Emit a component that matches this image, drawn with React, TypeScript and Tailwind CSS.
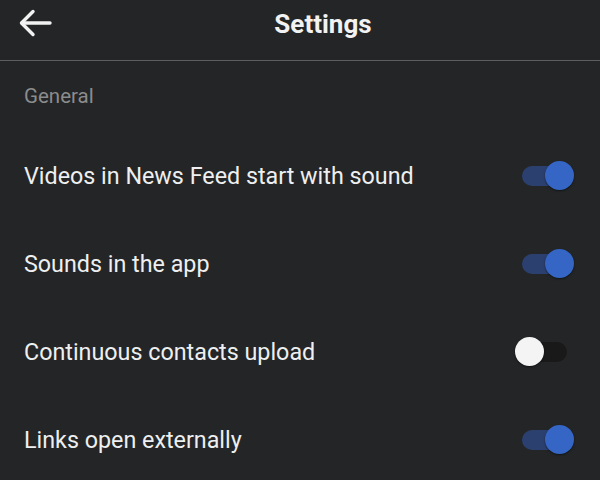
import { useState } from 'react';

type Setting = {
  label: string;
  on: boolean;
};

const initialSettings: Setting[] = [
  { label: 'Videos in News Feed start with sound', on: true },
  { label: 'Sounds in the app', on: true },
  { label: 'Continuous contacts upload', on: false },
  { label: 'Links open externally', on: true },
];

// toggle: ทางยาว 45px, ปุ่มกลม 29px
function Toggle({ on, onClick }: { on: boolean; onClick: () => void }) {
  return (
    <button type="button" onClick={onClick} className="relative w-[59px] h-[29px] shrink-0">
      <span
        className={`absolute left-[7px] right-[7px] top-[5px] h-[20px] rounded-full ${
          on ? 'bg-[#2c4070]' : 'bg-[#19191a]'
        }`}
      />
      <span
        className={`absolute top-0 w-[29px] h-[29px] rounded-full shadow-[0_1px_2px_rgba(0,0,0,0.5)] ${
          on ? 'right-0 bg-[#3566c6]' : 'left-0 bg-[#f4f4f4]'
        }`}
      />
    </button>
  );
}

export default function App() {
  const [settings, setSettings] = useState(initialSettings);

  const toggle = (i: number) => {
    setSettings((prev) => prev.map((s, idx) => (idx === i ? { ...s, on: !s.on } : s)));
  };

  return (
    <div className="w-[600px] h-[480px] overflow-hidden bg-[#242526] font-['Roboto',sans-serif] text-[#e8e9ea]">
      {/* หัวข้อ */}
      <div className="relative h-[61px] border-b border-[#5d5e5f] flex items-center justify-center">
        <svg
          className="absolute left-[17px] top-[7px]"
          width="38"
          height="32"
          viewBox="0 0 38 32"
          fill="none"
          stroke="#f2f2f2"
          strokeWidth="3.4"
          strokeLinecap="round"
          strokeLinejoin="round"
        >
          <path d="M33 16H5" />
          <path d="M16 4.5L4.5 16L16 27.5" />
        </svg>
        <h1 className="pl-[46px] pb-[12px] text-[26px] font-bold text-[#f2f2f2] leading-none">Settings</h1>
      </div>

      <div className="px-[24px] pt-[23px] pb-[23px] text-[20.5px] leading-[24px] text-[#8b8c8d]">General</div>

      {settings.map((s, i) => (
        <div key={s.label} className="h-[88px] flex items-center justify-between pl-[24px] pr-[26px]">
          <span className="pt-[3px] text-[23.3px] leading-none text-[#eeeff0]">{s.label}</span>
          <Toggle on={s.on} onClick={() => toggle(i)} />
        </div>
      ))}
    </div>
  );
}
